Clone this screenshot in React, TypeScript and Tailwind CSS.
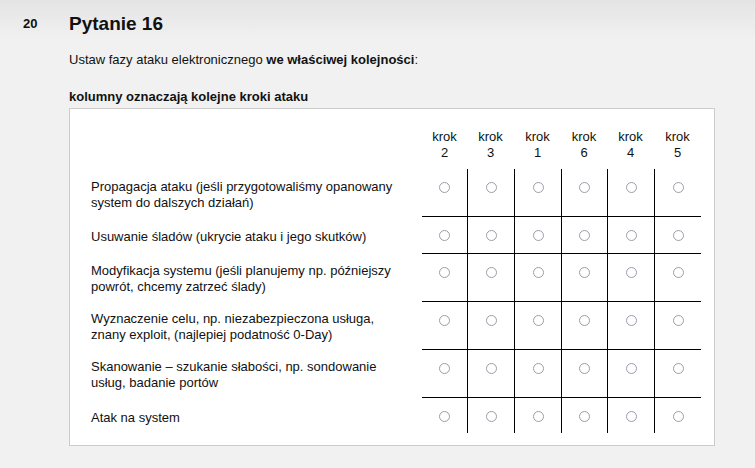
import { Fragment } from "react"

export default function App() {
  // kolejność kolumn w nagłówku
  const steps = ["2", "3", "1", "6", "4", "5"]

  // single = etykieta w jednej linii (tekst nieco niżej, jak w oryginale)
  const rows = [
    { label: "Propagacja ataku (jeśli przygotowaliśmy opanowany system do dalszych działań)", single: false },
    { label: "Usuwanie śladów (ukrycie ataku i jego skutków)", single: true },
    { label: "Modyfikacja systemu (jeśli planujemy np. późniejszy powrót, chcemy zatrzeć ślady)", single: false },
    { label: "Wyznaczenie celu, np. niezabezpieczona usługa, znany exploit, (najlepiej podatność 0-Day)", single: false },
    { label: "Skanowanie – szukanie słabości, np. sondowanie usług, badanie portów", single: false },
    { label: "Atak na system", single: true },
  ]

  return (
    <div className="min-h-screen bg-[linear-gradient(to_bottom,#e4e4e4,#f1f1f1_40px)] font-['Liberation_Sans',Arial,sans-serif] text-[#111]">
      <div className="flex pt-[12px]">
        <div className="w-[69px] pl-[23px] pt-[4px] text-[13px] font-bold leading-[16px]">20</div>
        <div className="w-[646px]">
          <h1 className="text-[19px] font-bold leading-[24px]">Pytanie 16</h1>
          <p className="mt-[16px] text-[13px] leading-[16px]">
            Ustaw fazy ataku elektronicznego <b>we właściwej kolejności</b>:
          </p>
          <p className="mt-[21px] text-[13px] font-bold leading-[16px]">kolumny oznaczają kolejne kroki ataku</p>

          <div className="mt-[3px] border border-[#cbcbcb] bg-white pr-[13px] pb-[12px]">
            <div className="grid grid-cols-[352px_45px_47px_47px_46px_47px_47px] text-[13px] leading-[16px]">
              {/* nagłówek */}
              <div />
              {steps.map((s, j) => (
                <div key={j} className="pt-[20px] pb-[8px] text-center">
                  krok
                  <br />
                  {s}
                </div>
              ))}

              {/* wiersze */}
              {rows.map((row, i) => (
                <Fragment key={i}>
                  <div
                    className={
                      row.single
                        ? "pl-[21px] pr-[19px] pt-[13px] pb-[4px]"
                        : i === 0
                          ? "pl-[21px] pr-[19px] pt-[10px] pb-[5px]"
                          : "pl-[21px] pr-[19px] pt-[10px] pb-[6px]"
                    }
                  >
                    {row.label}
                  </div>
                  {steps.map((_, j) => (
                    <div
                      key={j}
                      className={[
                        "flex justify-center border-black pt-[13px]",
                        i === rows.length - 1 ? "pb-[11px]" : "pb-[12px]",
                        i > 0 ? "border-t" : "",
                        j > 0 ? "border-l" : "",
                      ].join(" ")}
                    >
                      <span className="block h-[11px] w-[11px] rounded-full border border-[#9d9dab] bg-white" />
                    </div>
                  ))}
                </Fragment>
              ))}
            </div>
          </div>
        </div>
      </div>
    </div>
  )
}
